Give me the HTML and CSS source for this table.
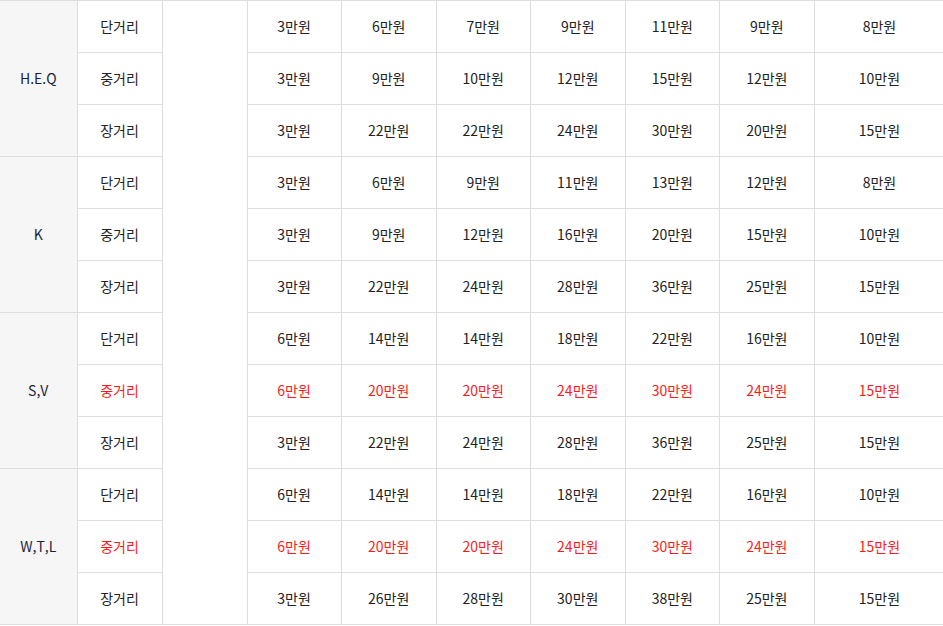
FILE: index.html
```html
<!DOCTYPE html>
<html lang="ko">
<head>
<meta charset="utf-8">
<link rel="stylesheet" href="styles.css">
</head>
<body>
<table class="price">
<colgroup>
<col class="c-grp"><col class="c-dist"><col class="c-blank">
<col class="c-a"><col class="c-b"><col class="c-a"><col class="c-b"><col class="c-a"><col class="c-b"><col class="c-last">
</colgroup>
<tbody>
<tr><td class="grp" rowspan="3">H.E.Q</td><td>단거리</td><td class="blank" rowspan="12"></td><td>3만원</td><td>6만원</td><td>7만원</td><td>9만원</td><td>11만원</td><td>9만원</td><td>8만원</td></tr>
<tr><td>중거리</td><td>3만원</td><td>9만원</td><td>10만원</td><td>12만원</td><td>15만원</td><td>12만원</td><td>10만원</td></tr>
<tr><td>장거리</td><td>3만원</td><td>22만원</td><td>22만원</td><td>24만원</td><td>30만원</td><td>20만원</td><td>15만원</td></tr>
<tr><td class="grp" rowspan="3">K</td><td>단거리</td><td>3만원</td><td>6만원</td><td>9만원</td><td>11만원</td><td>13만원</td><td>12만원</td><td>8만원</td></tr>
<tr><td>중거리</td><td>3만원</td><td>9만원</td><td>12만원</td><td>16만원</td><td>20만원</td><td>15만원</td><td>10만원</td></tr>
<tr><td>장거리</td><td>3만원</td><td>22만원</td><td>24만원</td><td>28만원</td><td>36만원</td><td>25만원</td><td>15만원</td></tr>
<tr><td class="grp" rowspan="3">S,V</td><td>단거리</td><td>6만원</td><td>14만원</td><td>14만원</td><td>18만원</td><td>22만원</td><td>16만원</td><td>10만원</td></tr>
<tr class="hl"><td>중거리</td><td>6만원</td><td>20만원</td><td>20만원</td><td>24만원</td><td>30만원</td><td>24만원</td><td>15만원</td></tr>
<tr><td>장거리</td><td>3만원</td><td>22만원</td><td>24만원</td><td>28만원</td><td>36만원</td><td>25만원</td><td>15만원</td></tr>
<tr><td class="grp" rowspan="3">W,T,L</td><td>단거리</td><td>6만원</td><td>14만원</td><td>14만원</td><td>18만원</td><td>22만원</td><td>16만원</td><td>10만원</td></tr>
<tr class="hl"><td>중거리</td><td>6만원</td><td>20만원</td><td>20만원</td><td>24만원</td><td>30만원</td><td>24만원</td><td>15만원</td></tr>
<tr><td>장거리</td><td>3만원</td><td>26만원</td><td>28만원</td><td>30만원</td><td>38만원</td><td>25만원</td><td>15만원</td></tr>
</tbody>
</table>
</body>
</html>
```
FILE: styles.css
```css
html, body {
  margin: 0;
  padding: 0;
  background: #fff;
  overflow: hidden;
}
.price {
  border-collapse: collapse;
  table-layout: fixed;
  width: 945px;
  font-family: "Noto Sans CJK KR", "Noto Sans", sans-serif;
  font-size: 14px;
  color: #222;
}
.c-grp { width: 77px; }
.c-dist { width: 85px; }
.c-blank { width: 85px; }
.c-a { width: 94px; }
.c-b { width: 95px; }
.c-last { width: 130px; }
.price td {
  height: 50px;
  padding: 0 0 1px;
  text-align: center;
  vertical-align: middle;
  border: 1px solid #dddddd;
  line-height: 20px;
}
.price td.grp {
  background: #f6f6f6;
  border-left: none;
  color: #1b1f3b;
}
.price tr.hl td { color: #ff1a1a; }
```
